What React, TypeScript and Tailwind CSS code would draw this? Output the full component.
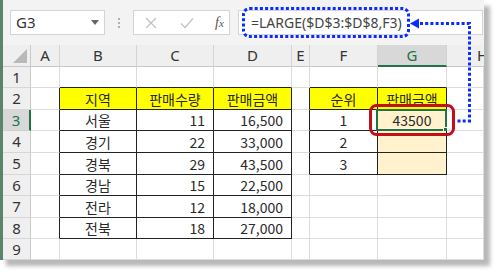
const COLS = ["A", "B", "C", "D", "E", "F", "G", "H"];
const ROW_H = [21, 22, 21, 22, 22, 21, 22, 21, 21];

type Cell = { text?: string; align?: "left" | "center" | "right"; fill?: string };

const DATA: Record<string, Cell> = {
  B2: { text: "지역", align: "center", fill: "yellow" },
  C2: { text: "판매수량", align: "center", fill: "yellow" },
  D2: { text: "판매금액", align: "center", fill: "yellow" },
  F2: { text: "순위", align: "center", fill: "yellow" },
  G2: { text: "판매금액", align: "center", fill: "yellow" },
  B3: { text: "서울", align: "center" },
  C3: { text: "11", align: "right" },
  D3: { text: "16,500", align: "right" },
  B4: { text: "경기", align: "center" },
  C4: { text: "22", align: "right" },
  D4: { text: "33,000", align: "right" },
  B5: { text: "경북", align: "center" },
  C5: { text: "29", align: "right" },
  D5: { text: "43,500", align: "right" },
  B6: { text: "경남", align: "center" },
  C6: { text: "15", align: "right" },
  D6: { text: "22,500", align: "right" },
  B7: { text: "전라", align: "center" },
  C7: { text: "12", align: "right" },
  D7: { text: "18,000", align: "right" },
  B8: { text: "전북", align: "center" },
  C8: { text: "18", align: "right" },
  D8: { text: "27,000", align: "right" },
  F3: { text: "1", align: "center" },
  F4: { text: "2", align: "center" },
  F5: { text: "3", align: "center" },
  G3: { text: "43500", align: "center", fill: "orange" },
  G4: { fill: "orange" },
  G5: { fill: "orange" },
};

// cells that sit inside a bordered table
function inTable(col: number, row: number) {
  // col index: 0 = A
  if (col >= 1 && col <= 3 && row >= 2 && row <= 8) return true;
  if (col >= 5 && col <= 6 && row >= 2 && row <= 5) return true;
  return false;
}

const FONT_KR = { fontFamily: '"Noto Sans CJK KR", "Noto Sans", sans-serif' };
const FONT_UI = { fontFamily: '"Noto Sans", "Open Sans", sans-serif' };

function FormulaBar() {
  return (
    <div className="flex h-[45px] items-start bg-[#f3f3f3] pt-[10px]" style={FONT_UI}>
      <div className="ml-[7px] flex h-[25px] w-[95px] shrink-0 items-center justify-between border border-[#d4d4d4] bg-white pl-[5px] pr-[5px]">
        <span className="text-[15px] leading-none text-[#333]">G3</span>
        <svg width="8" height="5" viewBox="0 0 8 5">
          <path d="M0 0 H8 L4 5 Z" fill="#666" />
        </svg>
      </div>
      <div className="ml-[13px] mr-[13px] flex h-[25px] flex-col items-center justify-center gap-[2px]">
        <span className="h-[2px] w-[2px] bg-[#b0b0b0]" />
        <span className="h-[2px] w-[2px] bg-[#b0b0b0]" />
        <span className="h-[2px] w-[2px] bg-[#b0b0b0]" />
      </div>
      <div className="flex h-[25px] w-[97px] shrink-0 items-center border border-[#d4d4d4] bg-white pl-[11px]">
        <svg width="12" height="12" viewBox="0 0 12 12">
          <path d="M1 1 L11 11 M11 1 L1 11" stroke="#c4c4c4" strokeWidth="1.4" />
        </svg>
        <svg width="14" height="12" viewBox="0 0 14 12" className="ml-[23px]">
          <path d="M1 6.5 L5 10.5 L13 1.5" stroke="#c4c4c4" strokeWidth="1.4" fill="none" />
        </svg>
        <span
          className="ml-[21px] text-[14px] italic leading-none text-[#555]"
          style={{ fontFamily: '"Liberation Serif", serif' }}
        >
          f<span className="text-[11px]">x</span>
        </span>
      </div>
      <div className="ml-[8px] mr-[1px] flex h-[25px] flex-1 items-center border border-[#d4d4d4] bg-white pl-[12px]">
        <span className="text-[14px] leading-none text-[#444]">=LARGE($D$3:$D$8,F3)</span>
      </div>
    </div>
  );
}

function Sheet() {
  return (
    <div className="grid grid-cols-[28px_29px_77px_77px_78px_18px_68px_69px_37px]">
      {/* column headers */}
      <div className="relative h-[22px] border-b border-r border-[#c9c9c9] bg-[#efefef]">
        <svg className="absolute bottom-[3px] right-[3px]" width="14" height="14" viewBox="0 0 14 14">
          <path d="M14 0 V14 H0 Z" fill="#b9b9b9" />
        </svg>
      </div>
      {COLS.map((c) =>
        c === "G" ? (
          <div
            key={c}
            className="flex h-[22px] items-center justify-center border-b-2 border-r border-b-[#217346] border-r-[#d0d0d0] bg-[#d8d8d8] text-[15px] text-[#217346]"
            style={FONT_UI}
          >
            {c}
          </div>
        ) : c === "H" ? (
          <div
            key={c}
            className="flex h-[22px] items-center justify-start overflow-hidden border-b border-b-[#c9c9c9] bg-[#efefef] pl-[30px] text-[15px] text-[#333]"
            style={FONT_UI}
          >
            {c}
          </div>
        ) : (
          <div
            key={c}
            className="flex h-[22px] items-center justify-center border-b border-r border-b-[#c9c9c9] border-r-[#d4d4d4] bg-[#efefef] text-[15px] text-[#333]"
            style={FONT_UI}
          >
            {c}
          </div>
        )
      )}

      {ROW_H.map((h, ri) => {
        const row = ri + 1;
        return [
          row === 3 ? (
            <div
              key={`h${row}`}
              className="flex items-center justify-center border-b border-r-2 border-b-[#d0d0d0] border-r-[#217346] bg-[#d8d8d8] text-[15px] text-[#217346]"
              style={{ ...FONT_UI, height: h }}
            >
              {row}
            </div>
          ) : (
            <div
              key={`h${row}`}
              className="flex items-center justify-center border-b border-r border-b-[#d6d6d6] border-r-[#c9c9c9] bg-[#efefef] text-[15px] text-[#333]"
              style={{ ...FONT_UI, height: h }}
            >
              {row}
            </div>
          ),
          ...COLS.map((c, ci) => {
            const cell = DATA[`${c}${row}`];
            const blackR = inTable(ci, row) || inTable(ci + 1, row);
            const blackB = inTable(ci, row) || inTable(ci, row + 1);
            const br = blackR ? "border-r-[#222]" : "border-r-[#dcdcdc]";
            const bb = blackB ? "border-b-[#222]" : "border-b-[#dcdcdc]";
            const bg =
              cell?.fill === "yellow" ? "bg-[#ffff00]" : cell?.fill === "orange" ? "bg-[#fff2cc]" : "bg-white";
            const al =
              cell?.align === "right"
                ? "justify-end pr-[8px]"
                : cell?.align === "center"
                  ? "justify-center"
                  : "justify-start pl-[3px]";
            const selected = c === "G" && row === 3;
            return (
              <div
                key={`${c}${row}`}
                className={`relative flex items-center border-b border-r ${br} ${bb} ${bg} ${al} text-[14px] leading-none text-[#2a2a2a]`}
                style={{ ...FONT_KR, height: h }}
              >
                {cell?.text}
                {selected && (
                  <>
                    <div className="pointer-events-none absolute -left-[2px] -top-[1px] bottom-[-1px] right-[-1px] border-2 border-[#217346]" />
                    <div className="absolute -bottom-[3px] -right-[3px] h-[6px] w-[6px] border border-white bg-[#217346]" />
                  </>
                )}
              </div>
            );
          }),
        ];
      })}
    </div>
  );
}

export default function App() {
  return (
    <div className="relative h-[275px] w-[500px] overflow-hidden bg-white">
      <div className="h-[260px] w-[484px] overflow-hidden border-l-[3px] border-[#5b8468] bg-white shadow-[6px_6px_4px_#b8b8b8]">
        <FormulaBar />
        <Sheet />
      </div>

      {/* annotation overlay */}
      <svg className="pointer-events-none absolute left-0 top-0" width="500" height="275" viewBox="0 0 500 275">
        <rect
          x="243.5"
          y="8.5"
          width="165"
          height="28"
          rx="6"
          fill="none"
          stroke="#0a2cff"
          strokeWidth="3"
          strokeDasharray="3 2.2"
        />
        <path d="M420 23.5 H469.5 V121 H456" fill="none" stroke="#0a2cff" strokeWidth="3" strokeDasharray="3 2.2" />
        <path d="M410 23.5 L419 18.5 L419 28.5 Z" fill="#0a2cff" />
        <rect x="370.5" y="105.5" width="83" height="29" rx="6" fill="none" stroke="#c0111b" strokeWidth="3" />
      </svg>
    </div>
  );
}
